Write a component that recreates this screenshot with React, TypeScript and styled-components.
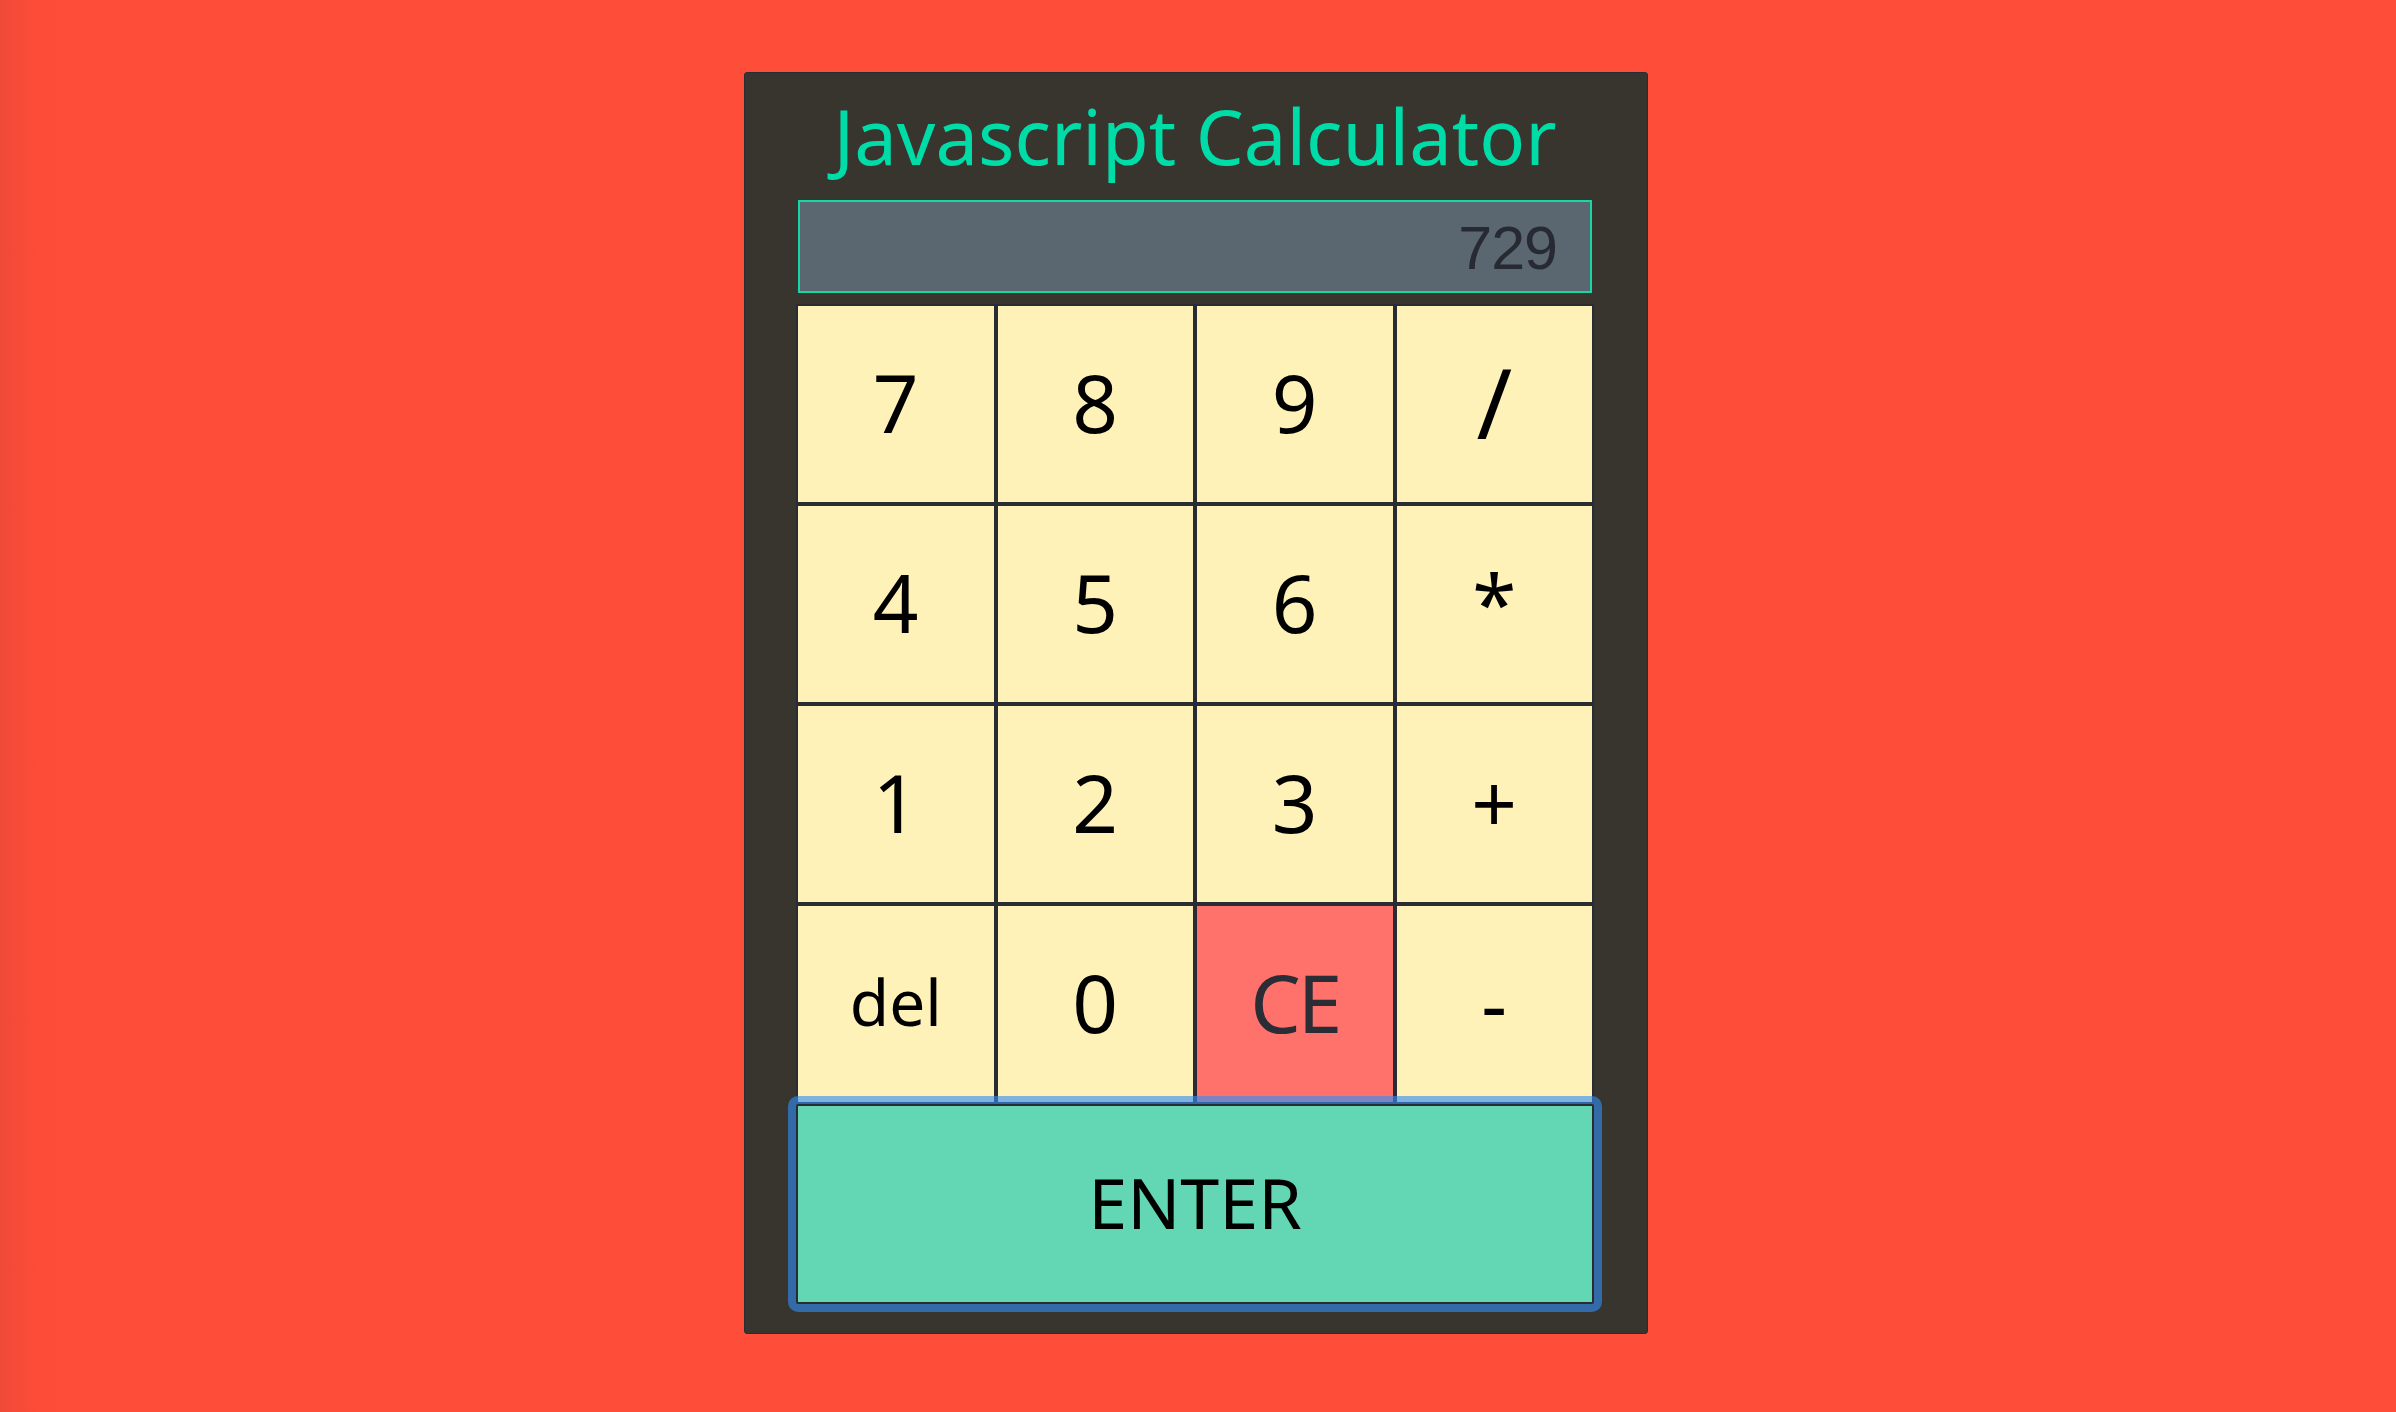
import React from "react";
import styled, { createGlobalStyle } from "styled-components";

const Global = createGlobalStyle`
  html, body { margin: 0; padding: 0; }
  body {
    min-height: 1412px;
    background: linear-gradient(to right, #f04a38 0px, #fd4d38 40px, #fe4d38 60px);
    background-color: #fe4d38;
  }
`;

const Page = styled.div`
  display: flex;
  justify-content: center;
  padding-top: 72px;
`;

const Panel = styled.div`
  box-sizing: border-box;
  width: 904px;
  height: 1262px;
  margin-left: -4px;
  background: #38352e;
  border: 1px solid #2a2c33;
  border-radius: 3px;
  padding: 0 53px 0 51px;
  display: flex;
  flex-direction: column;
`;

const Title = styled.h1`
  margin: 0;
  height: 127px;
  display: flex;
  align-items: center;
  justify-content: center;
  font-family: "Noto Sans", sans-serif;
  font-weight: 400;
  font-size: 76px;
  color: #00dca8;
  padding-bottom: 3px;
  box-sizing: border-box;
`;

const Display = styled.div`
  box-sizing: border-box;
  margin: 0 2px;
  height: 93px;
  background: #5a6670;
  border: 2px solid #14d8a6;
  display: flex;
  align-items: center;
  justify-content: flex-end;
  padding-right: 33px;
  padding-top: 3px;
  font-family: "Liberation Sans", Arial, sans-serif;
  font-size: 61px;
  letter-spacing: -1px;
  color: #272a33;
`;

const Keypad = styled.div`
  margin-top: 11px;
  display: grid;
  grid-template-columns: repeat(4, 1fr);
  grid-auto-rows: 200px;
`;

type Size = "digit" | "small" | "slash";

const sizes: Record<Size, string> = {
  digit: "80px",
  small: "64px",
  slash: "96px",
};

const Key = styled.button<{ $danger?: boolean; $size: Size }>`
  box-sizing: border-box;
  margin: 0;
  padding: 0 0 6px;
  border: 2px solid #2a2c33;
  background: ${(p) => (p.$danger ? "#ff716b" : "#fef2b8")};
  color: ${(p) => (p.$danger ? "#2a2d35" : "#000")};
  font-family: "Noto Sans", sans-serif;
  font-size: ${(p) => sizes[p.$size]};
  letter-spacing: ${(p) => (p.$danger ? "-3px" : "0")};
  display: flex;
  align-items: center;
  justify-content: center;
  cursor: pointer;
`;

const Enter = styled.button`
  position: relative;
  box-sizing: border-box;
  height: 200px;
  margin: 0;
  padding: 0 0 5px;
  border: 2px solid #2a2c33;
  background: #63d6b4;
  color: #000;
  font-family: "Noto Sans", sans-serif;
  font-size: 70px;
  display: flex;
  align-items: center;
  justify-content: center;
  &::after {
    content: "";
    position: absolute;
    inset: -10px;
    border: 8px solid rgba(48, 140, 245, 0.62);
    border-radius: 10px;
    pointer-events: none;
  }
`;

const keys: { label: string; danger?: boolean; size?: Size }[] = [
  { label: "7" }, { label: "8" }, { label: "9" }, { label: "/", size: "slash" },
  { label: "4" }, { label: "5" }, { label: "6" }, { label: "*" },
  { label: "1" }, { label: "2" }, { label: "3" }, { label: "+" },
  { label: "del", size: "small" }, { label: "0" }, { label: "CE", danger: true }, { label: "-" },
];

export default function App() {
  return (
    <>
      <Global />
      <Page>
        <Panel>
          <Title>Javascript Calculator</Title>
          <Display>729</Display>
          <Keypad>
            {keys.map((k) => (
              <Key key={k.label} $danger={k.danger} $size={k.size ?? "digit"}>
                {k.label}
              </Key>
            ))}
          </Keypad>
          <Enter>ENTER</Enter>
        </Panel>
      </Page>
    </>
  );
}
